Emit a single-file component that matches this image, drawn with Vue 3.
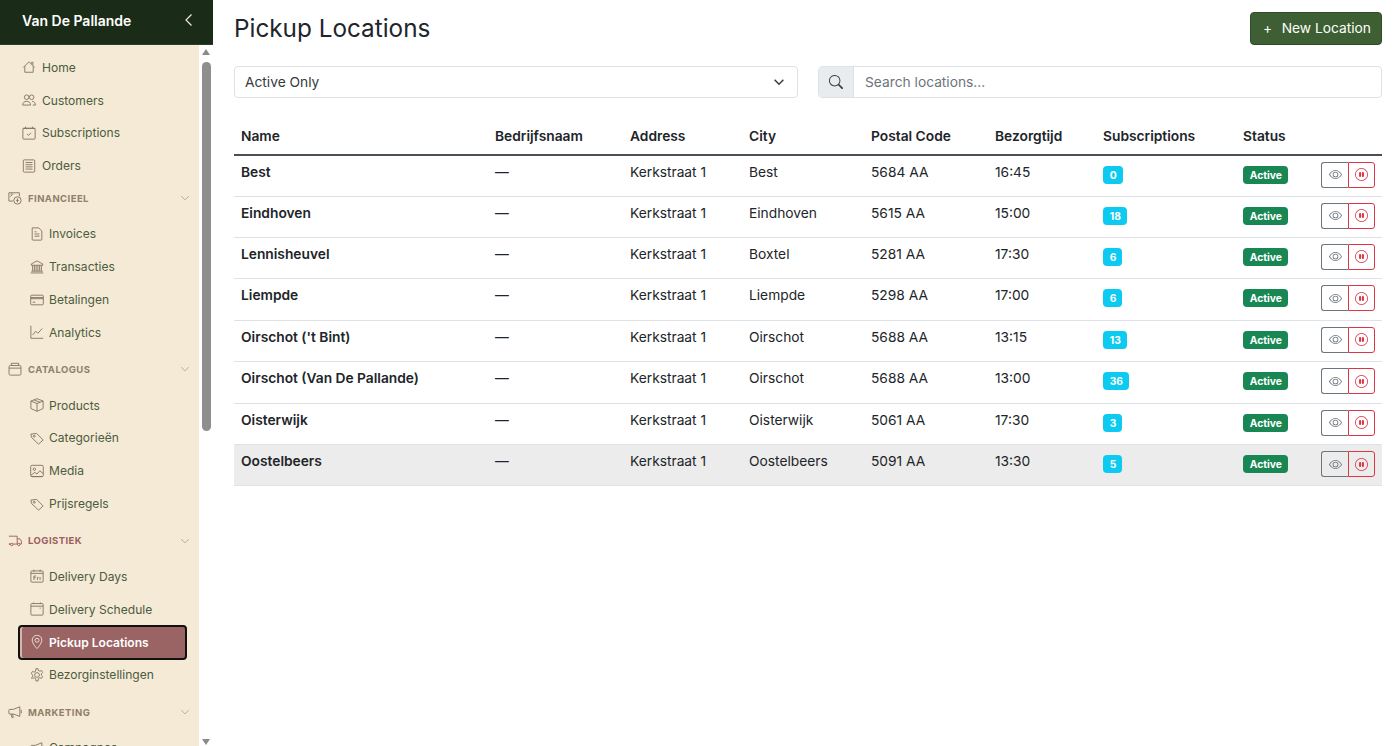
<script setup>
const icons = {
  home: '<path d="M1.500 8.500 8 2l6.500 6.500M3.200 7v7h9.600V7M11 4.200V2.600h1.500v3.200"/>',
  users: '<circle cx="5.300" cy="4.800" r="2.600"/><circle cx="11" cy="4.800" r="2.600"/><path d="M.8 13.800c0-2.800 1.800-4.300 4.500-4.300s4.500 1.500 4.500 4.300zM11.500 9.500c2.300 0 3.800 1.500 3.800 4.300h-3"/>',
  subs: '<rect x="1" y="2.500" width="14" height="12.500" rx="1"/><path d="M4 .8v2.500M12 .8v2.500M1 2.800h14M5.800 9.200l1.600 1.500 2.900-2.900"/>',
  orders: '<rect x="1.500" y="1" width="13" height="14" rx="1"/><path d="M4 4h8M4 6.500h8M4 9h8M4 11.500h8"/>',
  fin: '<path d="M6 11.500H1V2h12v4M4.500 4.500 2.500 6.500M3 3.500h3"/><circle cx="10.800" cy="10.800" r="4.200"/><path d="M10.800 8.500v4.500M9.300 10.800h3"/>',
  doc: '<path d="M2.500 1h7.500l3.500 3.500v9.700a.8.8 0 0 1-.8.8H3.300a.8.8 0 0 1-.8-.8zM5.200 8h5.600M5.200 10.500h5.600M5.200 5.500h2.300"/>',
  bank: '<path d="M8 1 1.500 4.500V6h13V4.500zM3 6v6.500M5 6v6.500M7 6v6.500M9 6v6.500M11 6v6.500M13 6v6.500M1.500 12.800h13M.8 14.800h14.400"/>',
  card: '<rect x=".8" y="2.500" width="14.400" height="11" rx="1"/><path d="M.8 5.200h14.400M.8 6.500h14.400M3 10.500h3"/>',
  chart: '<path d="M1 .8v14.400h14.200M3 11.500l3.500-4.500 2.500 2.500L14 4"/>',
  box: '<rect x="1.200" y="4" width="13.600" height="11" rx="1.500"/><path d="M3.800 4V1.500h8.400V4M1.200 7h13.600"/>',
  cube: '<path d="M8 .8 15 3.500V12l-7 3.200L1 12V3.500zM1 3.500 8 6.300l7-2.800M8 6.300v8.900M4.500 2.200l7 2.700"/>',
  tag: '<path d="M1 3.500 7.500 2.800l7.500 7.400-5.200 4.800L1.800 7.500z"/><circle cx="4.800" cy="6" r="1.100"/>',
  image: '<rect x=".8" y="1.500" width="14.400" height="13" rx="1.500"/><circle cx="5" cy="6" r="1.400"/><path d="M1 13 5.500 9.500l2.500 2 3.200-3.800 3.800 3.300M1.200 14.300h13.600"/>',
  truck: '<path d="M1 2.500h9.500v9H5.500M3 11.500H1zM10.500 5.500h3L15.300 8v3.500h-2M10.500 11.500h.7"/><circle cx="4.300" cy="12" r="1.400"/><circle cx="12.300" cy="12" r="1.400"/>',
  fri: '<rect x="1" y="2.200" width="14" height="12.800" rx="1"/><path d="M4.500 .8v2.500M11.500 .8v2.500M1 5h14M4.500 12.500V8H7M4.500 10h2M8.500 12.500V9.500h1.300M11.500 9v3.500"/>',
  cal: '<rect x="1" y="1.800" width="14" height="13.200" rx="1"/><path d="M1 4.800h14M4 .6v1.500M12 .6v1.500M11 7h1.200"/>',
  pin: '<path d="M8 15.500s5.500-5.500 5.500-9.700a5.500 5.500 0 0 0-11 0c0 4.200 5.500 9.700 5.500 9.700z"/><circle cx="8" cy="6" r="2.300"/>',
  gear: '<circle cx="8" cy="8" r="2.700"/><path d="M6.800.8h2.400l.4 2 1.700.9 1.900-.8 1.300 2.200-1.500 1.400v1.800l1.500 1.400-1.300 2.200-1.900-.8-1.700.9-.4 2.800H6.800l-.4-2.800-1.700-.9-1.900.8L1.500 11.500 3 10.100V8.300L1.500 6.100l1.300-2.200 1.900.8 1.700-.9z"/>',
  mega: '<path d="M13.500 2v11L6 10.300H2a1 1 0 0 1-1-1V6a1 1 0 0 1 1-1h4zM3.500 10.300l1 3.900H6l-.8-3.900M15.200 5.500v4"/>',
}

const nav = [
  { t: 'i', label: 'Home', icon: 'home' },
  { t: 'i', label: 'Customers', icon: 'users' },
  { t: 'i', label: 'Subscriptions', icon: 'subs' },
  { t: 'i', label: 'Orders', icon: 'orders' },
  { t: 's', label: 'Financieel', icon: 'fin', first: true },
  { t: 'c', label: 'Invoices', icon: 'doc' },
  { t: 'c', label: 'Transacties', icon: 'bank' },
  { t: 'c', label: 'Betalingen', icon: 'card' },
  { t: 'c', label: 'Analytics', icon: 'chart' },
  { t: 's', label: 'Catalogus', icon: 'box' },
  { t: 'c', label: 'Products', icon: 'cube' },
  { t: 'c', label: 'Categorieën', icon: 'tag' },
  { t: 'c', label: 'Media', icon: 'image' },
  { t: 'c', label: 'Prijsregels', icon: 'tag' },
  { t: 's', label: 'Logistiek', icon: 'truck', current: true },
  { t: 'c', label: 'Delivery Days', icon: 'fri' },
  { t: 'c', label: 'Delivery Schedule', icon: 'cal' },
  { t: 'c', label: 'Pickup Locations', icon: 'pin', active: true },
  { t: 'c', label: 'Bezorginstellingen', icon: 'gear' },
  { t: 's', label: 'Marketing', icon: 'mega' },
  { t: 'c', label: 'Campagnes', icon: 'mega' },
]

const columns = ['Name', 'Bedrijfsnaam', 'Address', 'City', 'Postal Code', 'Bezorgtijd', 'Subscriptions', 'Status', '']

const rows = [
  ['Best', 'Best', '5684 AA', '16:45', 0],
  ['Eindhoven', 'Eindhoven', '5615 AA', '15:00', 18],
  ['Lennisheuvel', 'Boxtel', '5281 AA', '17:30', 6],
  ['Liempde', 'Liempde', '5298 AA', '17:00', 6],
  ["Oirschot ('t Bint)", 'Oirschot', '5688 AA', '13:15', 13],
  ['Oirschot (Van De Pallande)', 'Oirschot', '5688 AA', '13:00', 36],
  ['Oisterwijk', 'Oisterwijk', '5061 AA', '17:30', 3],
  ['Oostelbeers', 'Oostelbeers', '5091 AA', '13:30', 5],
]
</script>

<template>
  <div class="app">
    <aside class="sidebar">
      <header class="brand">
        <span>Van De Pallande</span>
        <svg class="brand-chevron" viewBox="0 0 16 16"><path d="M10.500 2.500 5 8l5.500 5.500" /></svg>
      </header>
      <div class="side-body">
        <nav class="nav">
          <template v-for="item in nav" :key="item.label">
            <div v-if="item.t === 's'" class="section" :class="{ first: item.first, current: item.current }">
              <svg class="sec-icon" viewBox="0 0 16 16" v-html="icons[item.icon]"></svg>
              <span class="sec-label">{{ item.label }}</span>
              <svg class="sec-chevron" viewBox="0 0 16 16"><path d="M2 5l6 6 6-6" /></svg>
            </div>
            <a v-else class="item" :class="{ child: item.t === 'c', active: item.active }">
              <svg class="item-icon" viewBox="0 0 16 16" v-html="icons[item.icon]"></svg>
              <span>{{ item.label }}</span>
            </a>
          </template>
        </nav>
        <div class="scrollbar">
          <span class="arrow up"></span>
          <span class="thumb"></span>
          <span class="arrow down"></span>
        </div>
      </div>
    </aside>

    <main class="main">
      <div class="top">
        <h1>Pickup Locations</h1>
        <button class="new-btn"><span class="plus">+</span>New Location</button>
      </div>

      <div class="filters">
        <div class="select">
          <span>Active Only</span>
          <svg viewBox="0 0 16 16"><path d="M3 5.500 8 10.500l5-5" /></svg>
        </div>
        <div class="search">
          <span class="search-icon">
            <svg viewBox="0 0 16 16"><path d="M11.742 10.344a6.500 6.500 0 1 0-1.397 1.398h-.001q.044.06.098.115l3.850 3.850a1 1 0 0 0 1.415-1.414l-3.850-3.850a1 1 0 0 0-.115-.1zM12 6.500a5.500 5.500 0 1 1-11 0 5.500 5.500 0 0 1 11 0" /></svg>
          </span>
          <span class="search-input">Search locations...</span>
        </div>
      </div>

      <table class="table">
        <colgroup>
          <col class="c1" /><col class="c2" /><col class="c3" /><col class="c4" /><col class="c5" />
          <col class="c6" /><col class="c7" /><col class="c8" /><col class="c9" />
        </colgroup>
        <thead>
          <tr><th v-for="c in columns" :key="c">{{ c }}</th></tr>
        </thead>
        <tbody>
          <tr v-for="(r, i) in rows" :key="r[0]" :class="{ hover: i === rows.length - 1 }">
            <td class="name">{{ r[0] }}</td>
            <td>—</td>
            <td>Kerkstraat 1</td>
            <td>{{ r[1] }}</td>
            <td>{{ r[2] }}</td>
            <td>{{ r[3] }}</td>
            <td class="badge-cell"><span class="badge info">{{ r[4] }}</span></td>
            <td class="badge-cell"><span class="badge ok">Active</span></td>
            <td class="actions">
              <div class="btn-group">
                <span class="act view">
                  <svg viewBox="0 0 16 16"><path d="M16 8s-3-5.500-8-5.500S0 8 0 8s3 5.500 8 5.500S16 8 16 8M1.173 8a13 13 0 0 1 1.660-2.043C4.120 4.668 5.880 3.500 8 3.500s3.879 1.168 5.168 2.457A13 13 0 0 1 14.828 8q-.086.13-.195.288c-.335.480-.830 1.120-1.465 1.755C11.879 11.332 10.119 12.500 8 12.500s-3.879-1.168-5.168-2.457A13 13 0 0 1 1.172 8z" /><path d="M8 5.500a2.500 2.500 0 1 0 0 5 2.500 2.500 0 0 0 0-5M4.500 8a3.500 3.500 0 1 1 7 0 3.500 3.500 0 0 1-7 0" /></svg>
                </span>
                <span class="act pause">
                  <svg viewBox="0 0 16 16"><path d="M8 15A7 7 0 1 1 8 1a7 7 0 0 1 0 14m0 1A8 8 0 1 0 8 0a8 8 0 0 0 0 16" /><path d="M5 6.250a1.250 1.250 0 1 1 2.500 0v3.500a1.250 1.250 0 1 1-2.500 0zm3.500 0a1.250 1.250 0 1 1 2.500 0v3.500a1.250 1.250 0 1 1-2.500 0z" /></svg>
                </span>
              </div>
            </td>
          </tr>
        </tbody>
      </table>
    </main>
  </div>
</template>

<style>
html, body { margin: 0; background: #fff; overflow: hidden; }
</style>

<style scoped>
.app {
  display: flex;
  height: 746px;
  overflow: hidden;
  font-family: Inter, "Liberation Sans", sans-serif;
  color: #212529;
  font-size: 13.770px;
}

.sidebar { width: 213px; flex: none; display: flex; flex-direction: column; }
.brand {
  height: 40px;
  flex: none;
  background: #1a2c17;
  border-bottom: 1px solid #2c3f27;
  box-sizing: content-box;
  color: #fff;
  font-weight: 600;
  font-size: 14px;
  display: flex;
  align-items: center;
  justify-content: space-between;
  padding: 0 16px 4px 22px;
}
.brand-chevron { width: 16px; height: 16px; fill: none; stroke: #f1e8d6; stroke-width: 1.200; }

.side-body { flex: 1; min-height: 0; display: flex; }
.nav {
  width: 199px;
  flex: none;
  background: #f5ead6;
  overflow: hidden;
  padding: 6px 0 0;
  box-sizing: border-box;
}
.scrollbar {
  width: 14px;
  flex: none;
  background: #fff;
  display: flex;
  flex-direction: column;
  align-items: center;
}
.arrow { width: 0; height: 0; border-left: 4.500px solid transparent; border-right: 4.500px solid transparent; }
.arrow.up { border-bottom: 6px solid #8a8a8a; margin-top: 4px; }
.arrow.down { border-top: 6px solid #8a8a8a; margin-top: auto; margin-bottom: 1px; }
.thumb { width: 9px; height: 369px; background: #8e8e8e; border-radius: 5px; margin-top: 7px; }

.item {
  display: flex;
  align-items: center;
  height: 32.800px;
  padding-left: 22px;
  color: #4c5c40;
  font-size: 12.050px;
  box-sizing: border-box;
}
.item-icon { width: 14px; height: 14px; margin-right: 6px; flex: none; fill: none; stroke: #85765f; stroke-width: 1.050; }
.item.child { padding-left: 30px; }
.item.child .item-icon { margin-right: 5px; }

.item.active {
  margin-left: 18px;
  margin-right: 12px;
  padding-left: 10px;
  height: 35px;
  margin-top: -1px;
  margin-bottom: -1px;
  background: #9b6464;
  border: 2px solid #111;
  border-radius: 4px;
  box-shadow: inset 2px 0 0 #d5b8ab;
  color: #fff;
  font-weight: 600;
}
.item.active .item-icon { stroke: #f3e4d8; }

.section {
  display: flex;
  align-items: center;
  height: 24px;
  margin: 8.700px 0 7.300px;
  padding: 0 9px 0 8px;
  color: #8f8068;
}
.section.first { margin-top: 4.100px; }
.section.current { color: #9c6060; }
.sec-icon { width: 14px; height: 14px; margin-right: 6px; flex: none; fill: none; stroke: #85765f; stroke-width: 1.050; }
.section.current .sec-icon { stroke: #9c6060; }
.sec-label { flex: 1; font-size: 9.500px; font-weight: 700; letter-spacing: 0.450px; text-transform: uppercase; }
.sec-chevron { width: 10px; height: 10px; fill: none; stroke: #9a8c76; stroke-width: 1; }

.main { flex: 1; min-width: 0; padding: 12px 18px 0 21px; }
.top { display: flex; justify-content: space-between; align-items: flex-start; height: 33px; }
h1 { margin: 0; font-size: 24.300px; font-weight: 400; line-height: 33px; color: #212529; }
.new-btn {
  height: 33px;
  width: 132px;
  background: #3d5f33;
  border: 1px solid #2f4c28;
  border-radius: 4px;
  color: #fff;
  font: 400 13.770px Inter, sans-serif;
  padding: 0 0 1px 2px;
}
.plus { margin-right: 9.500px; }

.filters { display: grid; grid-template-columns: 1fr 1fr; gap: 20px; margin-top: 21px; }
.select, .search {
  height: 32px;
  box-sizing: border-box;
  border: 1px solid #dee2e6;
  border-radius: 4px;
  display: flex;
  align-items: center;
}
.select { justify-content: space-between; padding: 0 11px 0 10px; color: #343a40; }
.select svg { width: 14px; height: 14px; fill: none; stroke: #343a40; stroke-width: 1.600; }
.search-icon {
  width: 35px;
  height: 100%;
  box-sizing: border-box;
  background: #e9ecef;
  border-right: 1px solid #dee2e6;
  border-radius: 3px 0 0 3px;
  display: flex;
  align-items: center;
  justify-content: center;
  flex: none;
}
.search-icon svg { width: 14px; height: 14px; fill: #343a40; }
.search-input { padding-left: 11px; color: #6c757d; }

.table { width: 1148px; border-collapse: collapse; table-layout: fixed; margin-top: 19.600px; }
.c1 { width: 254px; } .c2 { width: 135px; } .c3 { width: 119px; } .c4 { width: 122px; }
.c5 { width: 124px; } .c6 { width: 108px; } .c7 { width: 140px; } .c8 { width: 78px; } .c9 { width: 68px; }
th {
  height: 37px;
  padding: 0 7px 9px;
  box-sizing: border-box;
  text-align: left;
  vertical-align: bottom;
  font-weight: 600;
  border-bottom: 2px solid #495057;
  line-height: 17px;
}
tbody tr { height: 41.430px; }
td {
  padding: 8px 7px 0;
  vertical-align: top;
  border-bottom: 1px solid #dee2e6;
  line-height: 17px;
  box-sizing: border-box;
}
.name { font-weight: 600; }
tr.hover { height: 40.500px; }
tr.hover td { background: #ececec; }
.badge-cell { padding-top: 10px; }
.badge {
  display: inline-block;
  height: 18px;
  line-height: 18px;
  padding: 0 6px 0 6.700px;
  border-radius: 4px;
  color: #fff;
  font-size: 10.300px;
  font-weight: 700;
  vertical-align: top;
}
.info { background: #0dcaf0; }
.ok { background: #198754; }
.actions { padding-top: 6px; text-align: right; }
.btn-group { display: inline-flex; vertical-align: top; }
.act { width: 27px; height: 26px; box-sizing: border-box; display: flex; align-items: center; justify-content: center; border: 1px solid; }
.act svg { width: 13px; height: 13px; }
.view { border-color: #6c757d; border-radius: 3px 0 0 3px; border-right: 0; }
.view svg { fill: #6c757d; }
.pause { border-color: #dc3545; border-radius: 0 3px 3px 0; }
.pause svg { fill: #dc3545; }
</style>
